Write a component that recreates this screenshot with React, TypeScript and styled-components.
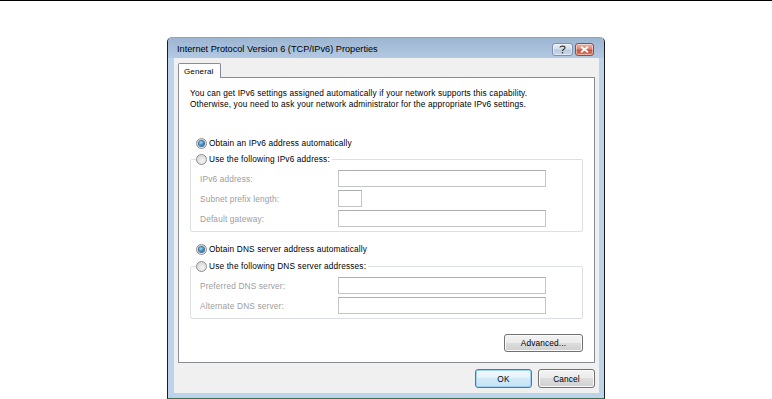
import React from "react";
import styled, { createGlobalStyle } from "styled-components";

const GlobalStyle = createGlobalStyle`
  html, body {
    margin: 0;
    padding: 0;
    background: #fff;
  }
  body {
    font-family: "Liberation Sans", Arial, sans-serif;
    font-size: 8.3px;
    letter-spacing: 0.15px;
    color: #000;
  }
`;

const Page = styled.div`
  width: 772px;
  height: 399px;
  box-sizing: border-box;
  border-top: 1px solid #000;
  padding-top: 36px;
  display: flex;
  justify-content: center;
  overflow: hidden;
`;

const Window = styled.div`
  width: 438px;
  height: 362px;
  box-sizing: border-box;
  display: flex;
  flex-direction: column;
  background: #bcd3ec;
  border: 1px solid #1c1c1c;
  border-top-color: #8aa5c2;
  border-bottom-color: #3f7147;
  border-radius: 5px 5px 0 0;
`;

const TitleBar = styled.div`
  height: 20px;
  flex: none;
  display: flex;
  align-items: center;
  padding: 0 10px 0 9px;
  background: linear-gradient(#9cb5d1, #b3c9e2);
  border-radius: 4px 4px 0 0;
`;

const Title = styled.span`
  flex: 1;
  font-size: 9.2px;
  letter-spacing: 0;
  color: #000;
  padding-top: 1px;
`;

const CaptionButtons = styled.div`
  display: flex;
  gap: 2px;
  margin-top: 2px;
`;

const CaptionButton = styled.div<{ $close?: boolean }>`
  width: ${(p) => (p.$close ? "19px" : "21px")};
  height: 13px;
  box-sizing: border-box;
  display: flex;
  align-items: center;
  justify-content: center;
  border: 1px solid ${(p) => (p.$close ? "#9a4a3a" : "#7d93ad")};
  border-radius: 3px;
  background: ${(p) =>
    p.$close
      ? "linear-gradient(#e9b4a8, #d98a78 45%, #c8543c 55%, #d47a62)"
      : "linear-gradient(#e8eff7, #d2deec 45%, #b9cbe0 55%, #c8d8ea)"};
  box-shadow: inset 0 0 0 1px rgba(255, 255, 255, 0.45);
`;

const Client = styled.div`
  flex: 1;
  display: flex;
  flex-direction: column;
  margin: 0 5px 5px 6px;
  padding: 5px 4px 0 4px;
  background: #f0f0f0;
`;

const TabStrip = styled.div`
  height: 15px;
  flex: none;
  box-sizing: border-box;
  display: flex;
  align-items: flex-end;
  border-bottom: 1px solid #898c95;
`;

const Tab = styled.div`
  height: 15px;
  box-sizing: border-box;
  padding: 0 6px 0 5px;
  margin-bottom: -1px;
  display: flex;
  align-items: center;
  font-size: 8px;
  background: #fff;
  border: 1px solid #898c95;
  border-bottom: none;
  border-radius: 2px 2px 0 0;
`;

const Panel = styled.div`
  height: 285px;
  flex: none;
  box-sizing: border-box;
  display: flex;
  flex-direction: column;
  padding: 10px 11px 0 11px;
  background: #fff;
  border: 1px solid #898c95;
  border-top: none;
`;

const Description = styled.p`
  margin: 0;
  line-height: 11px;
`;

const RadioRow = styled.label<{ $gap?: number }>`
  display: flex;
  align-items: center;
  height: 12px;
  padding-left: 6px;
  margin-top: ${(p) => p.$gap ?? 0}px;
`;

const RadioDot = styled.span<{ $checked?: boolean }>`
  width: 11px;
  height: 11px;
  flex: none;
  box-sizing: border-box;
  margin-right: 2px;
  border-radius: 50%;
  border: 1px solid #8e8f8f;
  display: flex;
  align-items: center;
  justify-content: center;
  background: radial-gradient(circle at 60% 65%, #f4f4f4, #cfcfcf);
  &::after {
    content: "";
    display: ${(p) => (p.$checked ? "block" : "none")};
    width: 5px;
    height: 5px;
    border-radius: 50%;
    background: radial-gradient(circle at 40% 35%, #9fe2fb, #2a7bc2 60%, #12406e);
    box-shadow: 0 0 0 1px #4a6f93;
  }
`;

const Group = styled.fieldset<{ $gap?: number }>`
  margin: ${(p) => p.$gap ?? 0}px 0 0 0;
  padding: 5px 0 4px 9px;
  border: 1px solid #dcdfe3;
  border-radius: 2px;
  display: grid;
  grid-template-columns: 138px 208px;
  row-gap: 3px;
  align-items: center;
`;

const Legend = styled.legend`
  padding: 0 2px 0 0;
  margin-left: -4px;
  line-height: 12px;
`;

const LegendRow = styled.span`
  display: flex;
  align-items: center;
  height: 12px;
`;

const FieldLabel = styled.span`
  color: #9d9d9d;
`;

const Field = styled.input<{ $short?: boolean }>`
  width: ${(p) => (p.$short ? "24px" : "208px")};
  height: 17px;
  box-sizing: border-box;
  margin: 0;
  padding: 0;
  border: 1px solid #c2c4c8;
  border-top-color: #abadb3;
  background: #fff;
`;

const Button = styled.button<{ $default?: boolean; $wide?: boolean }>`
  width: ${(p) => (p.$wide ? "79px" : "57px")};
  height: 19px;
  box-sizing: border-box;
  padding: 0;
  font-family: "Liberation Sans", Arial, sans-serif;
  font-size: 8.3px;
  letter-spacing: 0.15px;
  color: #000;
  border: 1px solid ${(p) => (p.$default ? "#3c7fb1" : "#707070")};
  border-radius: 3px;
  background: ${(p) =>
    p.$default
      ? "linear-gradient(#f2f9fd, #e3f2fb 50%, #d2e9f8 50%, #c6e3f6)"
      : "linear-gradient(#f3f3f3, #ebebeb 50%, #dddddd 50%, #cfcfcf)"};
  box-shadow: inset 0 0 0 1px ${(p) => (p.$default ? "#9fd3f2" : "#fbfbfb")};
`;

const AdvancedButton = styled(Button)`
  align-self: flex-end;
  height: 18px;
  margin-top: 15px;
`;

const Footer = styled.div`
  display: flex;
  justify-content: flex-end;
  gap: 6px;
  padding-top: 6px;
`;

const QuestionIcon = () => (
  <svg width="7" height="9" viewBox="0 0 7 9">
    <path
      d="M1 2.6 C1 0.6 6 0.6 6 2.8 C6 4.2 3.5 4.4 3.5 6"
      fill="none"
      stroke="#3a3a3a"
      strokeWidth="1.2"
    />
    <rect x="2.8" y="7" width="1.4" height="1.4" fill="#3a3a3a" />
  </svg>
);

const CloseIcon = () => (
  <svg width="9" height="7" viewBox="0 0 9 7">
    <path d="M1 0.8 L8 6.2 M8 0.8 L1 6.2" stroke="#fff" strokeWidth="1.8" />
  </svg>
);

export default function App() {
  return (
    <>
      <GlobalStyle />
      <Page>
        <Window>
          <TitleBar>
            <Title>Internet Protocol Version 6 (TCP/IPv6) Properties</Title>
            <CaptionButtons>
              <CaptionButton>
                <QuestionIcon />
              </CaptionButton>
              <CaptionButton $close>
                <CloseIcon />
              </CaptionButton>
            </CaptionButtons>
          </TitleBar>
          <Client>
            <TabStrip>
              <Tab>General</Tab>
            </TabStrip>
            <Panel>
              <Description>
                You can get IPv6 settings assigned automatically if your network supports this
                capability.
                <br />
                Otherwise, you need to ask your network administrator for the appropriate IPv6
                settings.
              </Description>

              <RadioRow $gap={27}>
                <RadioDot $checked />
                Obtain an IPv6 address automatically
              </RadioRow>
              <Group $gap={4}>
                <Legend>
                  <LegendRow>
                    <RadioDot />
                    Use the following IPv6 address:
                  </LegendRow>
                </Legend>
                <FieldLabel>IPv6 address:</FieldLabel>
                <Field disabled />
                <FieldLabel>Subnet prefix length:</FieldLabel>
                <Field disabled $short />
                <FieldLabel>Default gateway:</FieldLabel>
                <Field disabled />
              </Group>

              <RadioRow $gap={11}>
                <RadioDot $checked />
                Obtain DNS server address automatically
              </RadioRow>
              <Group $gap={5}>
                <Legend>
                  <LegendRow>
                    <RadioDot />
                    Use the following DNS server addresses:
                  </LegendRow>
                </Legend>
                <FieldLabel>Preferred DNS server:</FieldLabel>
                <Field disabled />
                <FieldLabel>Alternate DNS server:</FieldLabel>
                <Field disabled />
              </Group>

              <AdvancedButton $wide>Advanced...</AdvancedButton>
            </Panel>
            <Footer>
              <Button $default>OK</Button>
              <Button>Cancel</Button>
            </Footer>
          </Client>
        </Window>
      </Page>
    </>
  );
}
